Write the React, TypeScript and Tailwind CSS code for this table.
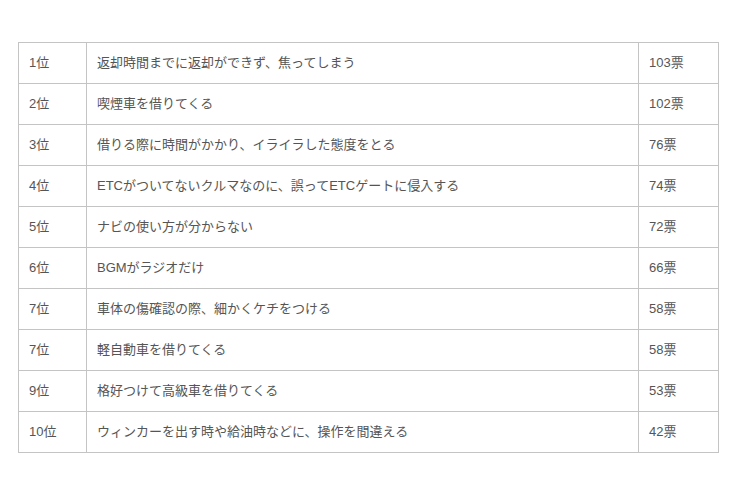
const rows = [
  ["1位", "返却時間までに返却ができず、焦ってしまう", "103票"],
  ["2位", "喫煙車を借りてくる", "102票"],
  ["3位", "借りる際に時間がかかり、イライラした態度をとる", "76票"],
  ["4位", "ETCがついてないクルマなのに、誤ってETCゲートに侵入する", "74票"],
  ["5位", "ナビの使い方が分からない", "72票"],
  ["6位", "BGMがラジオだけ", "66票"],
  ["7位", "車体の傷確認の際、細かくケチをつける", "58票"],
  ["7位", "軽自動車を借りてくる", "58票"],
  ["9位", "格好つけて高級車を借りてくる", "53票"],
  ["10位", "ウィンカーを出す時や給油時などに、操作を間違える", "42票"],
];

export default function App() {
  return (
    <div className="w-[740px] h-[493px] bg-white pt-[42px] pl-[18px] font-['Liberation_Sans','Noto_Sans_CJK_JP',sans-serif] text-[13px] text-[#555]">
      <table className="w-[700px] border-collapse table-fixed">
        <colgroup>
          <col className="w-[68px]" />
          <col className="w-[552px]" />
          <col className="w-[80px]" />
        </colgroup>
        <tbody>
          {rows.map((r, i) => (
            <tr key={i} className="h-[41px]">
              <td className="border border-[#c4c4c4] px-[10px] py-0 align-middle">{r[0]}</td>
              <td className="border border-[#c4c4c4] px-[10px] py-0 align-middle">{r[1]}</td>
              <td className="border border-[#c4c4c4] px-[10px] py-0 align-middle">{r[2]}</td>
            </tr>
          ))}
        </tbody>
      </table>
    </div>
  );
}
